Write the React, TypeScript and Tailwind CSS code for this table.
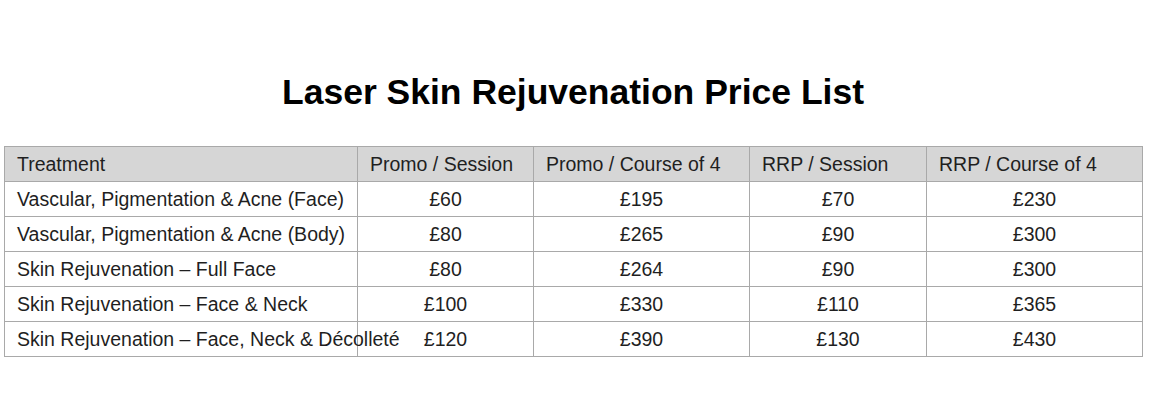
const rows = [
  ["Vascular, Pigmentation & Acne (Face)", "£60", "£195", "£70", "£230"],
  ["Vascular, Pigmentation & Acne (Body)", "£80", "£265", "£90", "£300"],
  ["Skin Rejuvenation – Full Face", "£80", "£264", "£90", "£300"],
  ["Skin Rejuvenation – Face & Neck", "£100", "£330", "£110", "£365"],
  ["Skin Rejuvenation – Face, Neck & Décolleté", "£120", "£390", "£130", "£430"],
];

const headers = ["Treatment", "Promo / Session", "Promo / Course of 4", "RRP / Session", "RRP / Course of 4"];

export default function App() {
  return (
    <div className="min-h-[413px] w-[1151px] bg-white pt-[75px] font-['Liberation_Sans',Arial,sans-serif] text-[#1f1f1f]">
      <h1 className="ml-[4px] w-[1138px] text-center text-[35.5px] font-bold leading-[35px] text-black">
        Laser Skin Rejuvenation Price List
      </h1>
      <table className="ml-[4px] mt-[36px] w-[1138px] table-fixed border-collapse text-[19.5px]">
        <colgroup>
          <col className="w-[353px]" />
          <col className="w-[176px]" />
          <col className="w-[216px]" />
          <col className="w-[177px]" />
          <col className="w-[216px]" />
        </colgroup>
        <thead>
          <tr className="h-[35px] bg-[#d6d6d6]">
            {headers.map((h) => (
              <th
                key={h}
                className="border border-[#a9a9a9] px-[12px] pt-[2px] text-left font-normal whitespace-nowrap"
              >
                {h}
              </th>
            ))}
          </tr>
        </thead>
        <tbody>
          {rows.map((r) => (
            <tr key={r[0]} className="h-[35px]">
              {r.map((c, i) => (
                <td
                  key={i}
                  className={
                    i === 0
                      ? "overflow-visible whitespace-nowrap border border-[#a9a9a9] px-[12px] pt-[2px] text-left"
                      : "border border-[#a9a9a9] px-[12px] pt-[2px] text-center"
                  }
                >
                  {c}
                </td>
              ))}
            </tr>
          ))}
        </tbody>
      </table>
    </div>
  );
}
